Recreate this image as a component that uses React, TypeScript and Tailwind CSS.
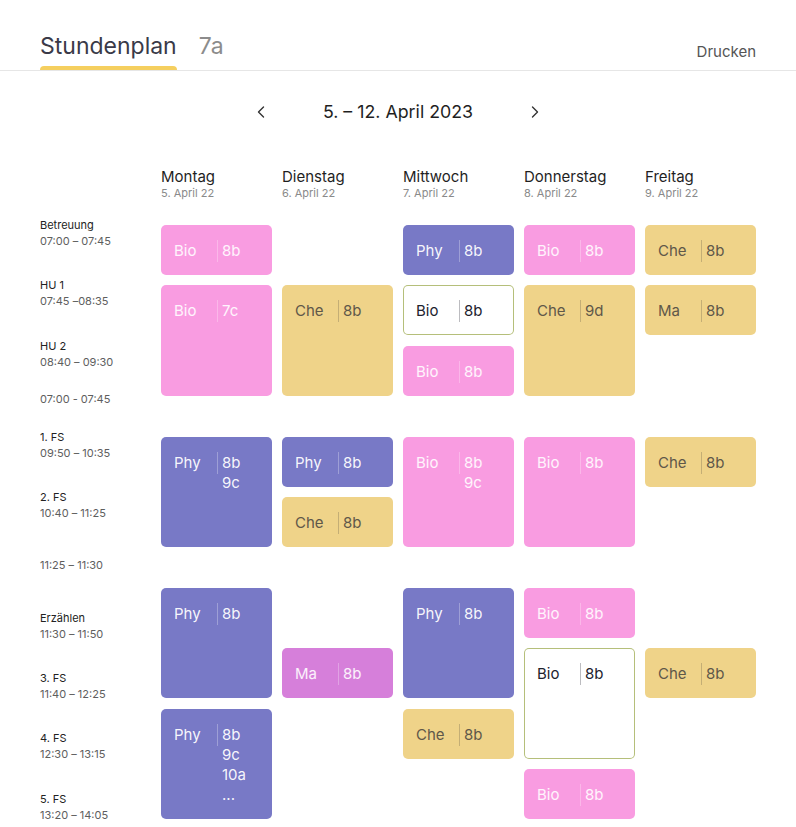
import React from "react";

type Tone = "pink" | "purple" | "yellow" | "magenta" | "white";

interface Lesson {
  subject: string;
  classes: string[];
  tone: Tone;
  place: string; // grid placement, written out in full
}

const toneClass: Record<Tone, string> = {
  pink: "bg-[#f99ce1] text-white/90",
  purple: "bg-[#7879c6] text-white/95",
  yellow: "bg-[#efd389] text-[#5f5849]",
  magenta: "bg-[#d67fda] text-white/90",
  white: "bg-white text-[#22222e] ring-1 ring-inset ring-[#b5bf7a]",
};

const days = [
  { name: "Montag", date: "5. April 22" },
  { name: "Dienstag", date: "6. April 22" },
  { name: "Mittwoch", date: "7. April 22" },
  { name: "Donnerstag", date: "8. April 22" },
  { name: "Freitag", date: "9. April 22" },
];

// Zeitspalte – Abstände wie im Entwurf, nicht ganz am Raster ausgerichtet
const slots = [
  { name: "Betreuung", time: "07:00 – 07:45", mt: "-mt-[8px]" },
  { name: "HU 1", time: "07:45 –08:35", mt: "mt-[28px]" },
  { name: "HU 2", time: "08:40 – 09:30", mt: "mt-[29px]" },
  { name: "", time: "07:00 - 07:45", mt: "mt-[21px]" },
  { name: "1. FS", time: "09:50 – 10:35", mt: "mt-[22px]" },
  { name: "2. FS", time: "10:40 – 11:25", mt: "mt-[28px]" },
  { name: "", time: "11:25 – 11:30", mt: "mt-[36px]" },
  { name: "Erzählen", time: "11:30 – 11:50", mt: "mt-[37px]" },
  { name: "3. FS", time: "11:40 – 12:25", mt: "mt-[28px]" },
  { name: "4. FS", time: "12:30 – 13:15", mt: "mt-[28px]" },
  { name: "5. FS", time: "13:20 – 14:05", mt: "mt-[29px]" },
];

const lessons: Lesson[] = [
  // Montag
  { subject: "Bio", classes: ["8b"], tone: "pink", place: "col-start-1 row-start-1" },
  { subject: "Bio", classes: ["7c"], tone: "pink", place: "col-start-1 row-start-2 row-span-2" },
  { subject: "Phy", classes: ["8b", "9c"], tone: "purple", place: "col-start-1 row-start-5 row-span-2" },
  { subject: "Phy", classes: ["8b"], tone: "purple", place: "col-start-1 row-start-8 row-span-2" },
  { subject: "Phy", classes: ["8b", "9c", "10a", "..."], tone: "purple", place: "col-start-1 row-start-10 row-span-2" },
  // Dienstag
  { subject: "Che", classes: ["8b"], tone: "yellow", place: "col-start-2 row-start-2 row-span-2" },
  { subject: "Phy", classes: ["8b"], tone: "purple", place: "col-start-2 row-start-5" },
  { subject: "Che", classes: ["8b"], tone: "yellow", place: "col-start-2 row-start-6" },
  { subject: "Ma", classes: ["8b"], tone: "magenta", place: "col-start-2 row-start-9" },
  // Mittwoch
  { subject: "Phy", classes: ["8b"], tone: "purple", place: "col-start-3 row-start-1" },
  { subject: "Bio", classes: ["8b"], tone: "white", place: "col-start-3 row-start-2" },
  { subject: "Bio", classes: ["8b"], tone: "pink", place: "col-start-3 row-start-3" },
  { subject: "Bio", classes: ["8b", "9c"], tone: "pink", place: "col-start-3 row-start-5 row-span-2" },
  { subject: "Phy", classes: ["8b"], tone: "purple", place: "col-start-3 row-start-8 row-span-2" },
  { subject: "Che", classes: ["8b"], tone: "yellow", place: "col-start-3 row-start-10" },
  // Donnerstag
  { subject: "Bio", classes: ["8b"], tone: "pink", place: "col-start-4 row-start-1" },
  { subject: "Che", classes: ["9d"], tone: "yellow", place: "col-start-4 row-start-2 row-span-2" },
  { subject: "Bio", classes: ["8b"], tone: "pink", place: "col-start-4 row-start-5 row-span-2" },
  { subject: "Bio", classes: ["8b"], tone: "pink", place: "col-start-4 row-start-8" },
  { subject: "Bio", classes: ["8b"], tone: "white", place: "col-start-4 row-start-9 row-span-2" },
  { subject: "Bio", classes: ["8b"], tone: "pink", place: "col-start-4 row-start-11" },
  // Freitag
  { subject: "Che", classes: ["8b"], tone: "yellow", place: "col-start-5 row-start-1" },
  { subject: "Ma", classes: ["8b"], tone: "yellow", place: "col-start-5 row-start-2" },
  { subject: "Che", classes: ["8b"], tone: "yellow", place: "col-start-5 row-start-5" },
  { subject: "Che", classes: ["8b"], tone: "yellow", place: "col-start-5 row-start-9" },
];

function LessonCard({ lesson }: { lesson: Lesson }) {
  return (
    <div
      className={`${lesson.place} ${toneClass[lesson.tone]} flex items-start rounded-[5px] pl-[13px] pt-[15px] text-[15px]`}
    >
      <span className="w-[43px] leading-[22px]">{lesson.subject}</span>
      <span className="h-[22px] w-px bg-current opacity-30" />
      <div className="mt-px flex flex-col pl-[4px] leading-[20px]">
        {lesson.classes.map((c) => (
          <span key={c}>{c}</span>
        ))}
      </div>
    </div>
  );
}

function Chevron({ dir }: { dir: "left" | "right" }) {
  return (
    <svg width="8" height="12" viewBox="0 0 8 12" fill="none" className="text-[#333]">
      <path
        d={dir === "left" ? "M6.5 1 L1.5 6 L6.5 11" : "M1.5 1 L6.5 6 L1.5 11"}
        stroke="currentColor"
        strokeWidth="1.4"
        strokeLinecap="round"
        strokeLinejoin="round"
      />
    </svg>
  );
}

export default function App() {
  return (
    <div
      className="min-h-[827px] w-[796px] bg-white text-[#222]"
      style={{ fontFamily: "Inter, 'Noto Sans', sans-serif" }}
    >
      {/* KOPFZEILE */}
      <header className="flex h-[71px] items-end border-b border-[#e6e6e6] px-[40px]">
        <div className="flex flex-col">
          <span className="text-[23px] leading-[28px] text-[#3a3a48]">Stundenplan</span>
          <span className="mt-[6px] h-[4px] rounded-t-[4px] bg-[#f5cf5f]" />
        </div>
        <span className="mb-[10px] ml-[22px] text-[23px] leading-[28px] text-[#8c8c8c]">7a</span>
        <button className="mb-[8px] ml-auto text-[15px] leading-[20px] text-[#555]">Drucken</button>
      </header>

      {/* WOCHENNAVIGATION */}
      <div className="mt-[30px] flex h-[22px] items-center justify-center gap-[58px]">
        <Chevron dir="left" />
        <span className="text-[17.8px] leading-[22px] text-[#1f1f1f]">5. – 12. April 2023</span>
        <Chevron dir="right" />
      </div>

      {/* TAGE */}
      <div className="mt-[45px] flex gap-[10px] px-[40px]">
        <div className="w-[111px]" />
        {days.map((d) => (
          <div key={d.name} className="flex w-[111px] flex-col">
            <span className="text-[15px] leading-[18px] text-[#1f1f1f]">{d.name}</span>
            <span className="text-[11px] leading-[14px] text-[#8a8a8a]">{d.date}</span>
          </div>
        ))}
      </div>

      {/* RASTER */}
      <div className="mt-[25px] flex gap-[10px] px-[40px]">
        <div className="flex w-[111px] flex-col">
          {slots.map((s, i) => (
            <div key={i} className={`${s.mt} flex flex-col text-[11px] leading-[16px]`}>
              {s.name && <span className="text-[#222]">{s.name}</span>}
              <span className="text-[#5e5e5e]">{s.time}</span>
            </div>
          ))}
        </div>
        <div className="grid grid-cols-[repeat(5,111px)] grid-rows-[50px_50px_50px_20px_50px_50px_20px_50px_50px_50px_50px] gap-x-[10px] gap-y-[10.4px]">
          {lessons.map((l, i) => (
            <LessonCard key={i} lesson={l} />
          ))}
        </div>
      </div>
    </div>
  );
}
